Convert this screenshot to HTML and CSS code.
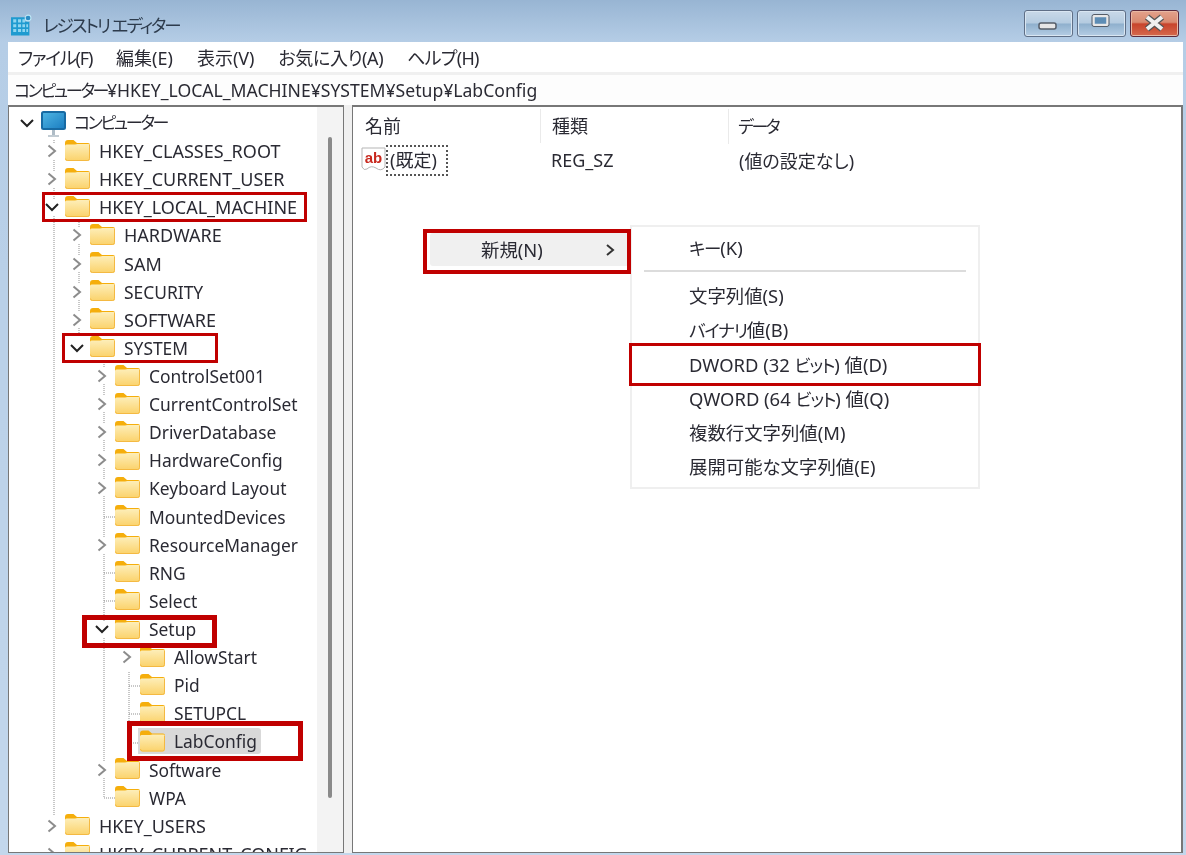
FILE: index.html
```html
<!DOCTYPE html>
<html lang="ja">
<head>
<meta charset="utf-8">
<title>レジストリ エディター</title>
<link rel="stylesheet" href="styles.css">
</head>
<body>
<svg class="defs" aria-hidden="true">
  <defs>
    <linearGradient id="fg" x1="0" y1="0" x2="0" y2="1"><stop offset="0" stop-color="#fdeeb9"/><stop offset="1" stop-color="#fbd26a"/></linearGradient>
    <linearGradient id="sg" x1="0" y1="0" x2="1" y2="1"><stop offset="0" stop-color="#4fb6e4"/><stop offset="1" stop-color="#1a7cc0"/></linearGradient>
    <symbol id="folder" viewBox="0 0 25 21">
      <path d="M0 3Q0 0 3 0H8.500L12 3H23Q25 3 25 5V9H0Z" fill="#f5ae0c"/>
      <path d="M0 6Q0 4.500 1.500 4.500H10L12.500 4H23.500Q25 4 25 5.500V18.500Q25 21 22.500 21H2.500Q0 21 0 18.500Z" fill="url(#fg)"/>
      <path d="M24.500 5V18.500Q24.500 20.500 22.500 20.500H2.500Q0.500 20.500 0.500 18.500" fill="none" stroke="#f4b942"/>
    </symbol>
    <symbol id="closed" viewBox="0 0 16 16"><path d="M4.500 2.500L11 8L4.500 13.500" fill="none" stroke="#8c8c8c" stroke-width="2"/></symbol>
    <symbol id="open" viewBox="0 0 16 16"><path d="M2 5L8 11L14 5" fill="none" stroke="#222" stroke-width="2"/></symbol>
  </defs>
</svg>
<div class="window">
  <header class="titlebar">
    <svg class="app-icon" viewBox="0 0 24 24">
      <path d="M0 3H16V8H21V24H0Z" fill="#1f9bd0"/>
      <path d="M2.500 5.500h3.500v3.500h-3.500zM8 5.500h3.500v3.500H8zM13 5.500h3v3.500h-3zM2.500 11h3.500v3.500h-3.500zM8 11h3.500v3.500H8zM13 11h3v3.500h-3zM17.500 11h2v3.500h-2zM2.500 16.500h3.500v3.500h-3.500zM8 16.500h3.500v3.500H8zM13 16.500h3v3.500h-3zM17.500 16.500h2v3.500h-2z" fill="#8fd6f0"/>
      <circle cx="19.500" cy="4" r="3.300" fill="#2c8cc4" stroke="#bfe6f5" stroke-width="1.200"/>
    </svg>
    <span class="title">レジストリ エディター</span>
    <div class="controls">
      <div class="ctl"><svg viewBox="0 0 47 25"><rect x="14" y="12" width="17" height="6" rx="2" fill="#e6e6e6" stroke="#555d68" stroke-width="1.500"/></svg></div>
      <div class="ctl"><svg viewBox="0 0 47 25"><rect x="15.500" y="5" width="14" height="9" rx="1" fill="#5d8db5" stroke="#e8e8e8" stroke-width="2.500"/><rect x="14" y="3.500" width="17" height="12" rx="2" fill="none" stroke="#555d68"/></svg></div>
      <div class="ctl ctl-close"><svg viewBox="0 0 47 25"><path d="M16 6L31 18M31 6L16 18" stroke="#555" stroke-width="6.500"/><path d="M16 6L31 18M31 6L16 18" stroke="#f0f0f0" stroke-width="4"/></svg></div>
    </div>
  </header>
  <nav class="menubar">
    <span class="tight1">ファイル(F)</span><span>編集(E)</span><span>表示(V)</span><span class="tight3">お気に入り(A)</span><span class="tight2">ヘルプ(H)</span>
  </nav>
  <div class="address"><span class="kana">コンピューター</span>¥HKEY_LOCAL_MACHINE¥SYSTEM¥Setup¥LabConfig</div>
  <main class="panes">
    <section class="tree">
      <svg class="guides" aria-hidden="true"><path d="M45 33V708M70 115V228M95 253V690M120 565V638M95 410H107M95 466H107M95 494H107M95 691H107M120 579H132M120 607H132M120 636H132" fill="none" stroke="#8f8f8f" stroke-dasharray="1 1"/></svg>
      <div class="rows">
        <div class="row l0"><svg class="chev"><use href="#open"/></svg><svg class="monitor" viewBox="0 0 25 27"><rect x="1" y="1" width="23" height="17" rx="1.500" fill="url(#sg)" stroke="#176aa3" stroke-width="2"/><path d="M11 19h3v5h-3z" fill="#aebcc6"/><path d="M7 24h11v2H7z" fill="#c2ccd3"/></svg><span class="label kana">コンピューター</span></div>
        <div class="row l1"><svg class="chev"><use href="#closed"/></svg><svg class="fold"><use href="#folder"/></svg><span class="label caps">HKEY_CLASSES_ROOT</span></div>
        <div class="row l1"><svg class="chev"><use href="#closed"/></svg><svg class="fold"><use href="#folder"/></svg><span class="label caps">HKEY_CURRENT_USER</span></div>
        <div class="row l1"><svg class="chev"><use href="#open"/></svg><svg class="fold"><use href="#folder"/></svg><span class="label caps">HKEY_LOCAL_MACHINE</span></div>
        <div class="row l2"><svg class="chev"><use href="#closed"/></svg><svg class="fold"><use href="#folder"/></svg><span class="label caps">HARDWARE</span></div>
        <div class="row l2"><svg class="chev"><use href="#closed"/></svg><svg class="fold"><use href="#folder"/></svg><span class="label caps">SAM</span></div>
        <div class="row l2"><svg class="chev"><use href="#closed"/></svg><svg class="fold"><use href="#folder"/></svg><span class="label">SECURITY</span></div>
        <div class="row l2"><svg class="chev"><use href="#closed"/></svg><svg class="fold"><use href="#folder"/></svg><span class="label caps">SOFTWARE</span></div>
        <div class="row l2"><svg class="chev"><use href="#open"/></svg><svg class="fold"><use href="#folder"/></svg><span class="label">SYSTEM</span></div>
        <div class="row l3"><svg class="chev"><use href="#closed"/></svg><svg class="fold"><use href="#folder"/></svg><span class="label">ControlSet001</span></div>
        <div class="row l3"><svg class="chev"><use href="#closed"/></svg><svg class="fold"><use href="#folder"/></svg><span class="label">CurrentControlSet</span></div>
        <div class="row l3"><svg class="chev"><use href="#closed"/></svg><svg class="fold"><use href="#folder"/></svg><span class="label">DriverDatabase</span></div>
        <div class="row l3"><svg class="chev"><use href="#closed"/></svg><svg class="fold"><use href="#folder"/></svg><span class="label">HardwareConfig</span></div>
        <div class="row l3"><svg class="chev"><use href="#closed"/></svg><svg class="fold"><use href="#folder"/></svg><span class="label">Keyboard Layout</span></div>
        <div class="row l3"><span class="chev"></span><svg class="fold"><use href="#folder"/></svg><span class="label">MountedDevices</span></div>
        <div class="row l3"><svg class="chev"><use href="#closed"/></svg><svg class="fold"><use href="#folder"/></svg><span class="label">ResourceManager</span></div>
        <div class="row l3"><span class="chev"></span><svg class="fold"><use href="#folder"/></svg><span class="label">RNG</span></div>
        <div class="row l3"><span class="chev"></span><svg class="fold"><use href="#folder"/></svg><span class="label">Select</span></div>
        <div class="row l3"><svg class="chev"><use href="#open"/></svg><svg class="fold"><use href="#folder"/></svg><span class="label">Setup</span></div>
        <div class="row l4"><svg class="chev"><use href="#closed"/></svg><svg class="fold"><use href="#folder"/></svg><span class="label">AllowStart</span></div>
        <div class="row l4"><span class="chev"></span><svg class="fold"><use href="#folder"/></svg><span class="label">Pid</span></div>
        <div class="row l4"><span class="chev"></span><svg class="fold"><use href="#folder"/></svg><span class="label">SETUPCL</span></div>
        <div class="row l4 selected"><span class="chev"></span><svg class="fold"><use href="#folder"/></svg><span class="label">LabConfig</span></div>
        <div class="row l3"><svg class="chev"><use href="#closed"/></svg><svg class="fold"><use href="#folder"/></svg><span class="label">Software</span></div>
        <div class="row l3"><span class="chev"></span><svg class="fold"><use href="#folder"/></svg><span class="label">WPA</span></div>
        <div class="row l1"><svg class="chev"><use href="#closed"/></svg><svg class="fold"><use href="#folder"/></svg><span class="label caps">HKEY_USERS</span></div>
        <div class="row l1"><svg class="chev"><use href="#closed"/></svg><svg class="fold"><use href="#folder"/></svg><span class="label caps">HKEY_CURRENT_CONFIG</span></div>
      </div>
      <div class="scroll"><div class="thumb"></div></div>
    </section>
    <section class="list">
      <div class="list-head"><span class="col c1">名前</span><span class="col c2">種類</span><span class="col c3"><span class="kana">データ</span></span></div>
      <div class="list-row">
        <div class="col c1 name-cell">
          <svg class="ab" viewBox="0 0 25 26"><path d="M1 1H24V20Q20 25 15 21Q10 18 6 22Q3 24 1 20Z" fill="#fff" stroke="#b5b5b5"/><text x="12.500" y="16" class="ab-text">ab</text></svg>
          <span class="focus">(既定)</span>
        </div>
        <span class="col c2">REG_SZ</span><span class="col c3 data">(値の設定なし)</span>
      </div>
      <div class="ctx ctx-left"><div class="ctx-new"><span>新規(N)</span><svg class="sub" viewBox="0 0 12 14"><path d="M3 2L9 7L3 12" fill="none" stroke="#333" stroke-width="2"/></svg></div></div>
      <div class="ctx ctx-right">
        <div class="item"><span class="kana">キー</span>(K)</div>
        <div class="sep"></div>
        <div class="item">文字列値(S)</div>
        <div class="item"><span class="kana">バイナリ</span>値(B)</div>
        <div class="item">DWORD (32 <span class="kana">ビット</span>) 値(D)</div>
        <div class="item">QWORD (64 <span class="kana">ビット</span>) 値(Q)</div>
        <div class="item">複数行文字列値(M)</div>
        <div class="item">展開可能な文字列値(E)</div>
      </div>
    </section>
  </main>
  <div class="mark m1"></div>
  <div class="mark m2"></div>
  <div class="mark m3"></div>
  <div class="mark m4"></div>
  <div class="mark m5"></div>
  <div class="mark m6"></div>
</div>
</body>
</html>
```
FILE: styles.css
```css
* { box-sizing: border-box; }
html, body { margin: 0; padding: 0; }
body { font-family: "Noto Sans", "Noto Sans CJK JP", sans-serif; font-feature-settings: "palt"; color: #2a2a33; }
.defs { position: absolute; width: 0; height: 0; }
.window { position: relative; width: 1186px; height: 855px; overflow: hidden; padding: 0 3px 2px 8px; display: flex; flex-direction: column; background: linear-gradient(180deg, #98b5d3 0, #b5cde6 42px, #c3d7ec 100%); filter: blur(0.3px); }
.titlebar { height: 42px; margin-left: -8px; margin-right: -3px; padding: 10px 7px 0 11px; display: flex; align-items: flex-start; flex: none; }
.app-icon { width: 21px; height: 22px; margin-top: 4px; flex: none; }
.title { margin-left: 11px; font-size: 17.500px; letter-spacing: -2px; line-height: 30px; color: #2d3b4c; }
.controls { margin-left: auto; display: flex; gap: 4px; }
.ctl { width: 49px; height: 27px; border: 1px solid #5f6f86; border-radius: 3px; box-shadow: inset 0 0 0 1px #d9e6f2; background: linear-gradient(180deg, #c9d9e8 0, #b4cbe0 48%, #8fb0cd 52%, #b5cde4 100%); }
.ctl svg { display: block; width: 47px; height: 25px; }
.ctl-close { border-color: #5c2a3c; box-shadow: inset 0 0 0 1px #e8b8a4; background: linear-gradient(180deg, #e3a28c 0, #d98a70 45%, #c8442c 52%, #d5694d 100%); }
.menubar { height: 30px; flex: none; background: #fff; display: flex; align-items: center; padding: 0 0 0 10px; gap: 24px; font-size: 18px; }
.tight1 { letter-spacing: -1.200px; }
.tight2 { letter-spacing: -0.700px; }
.tight3 { letter-spacing: -0.400px; }
.address { height: 33px; flex: none; border-top: 3px solid #f0f0f0; background: #fdfdfd; padding-left: 6px; line-height: 30px; font-size: 17.600px; white-space: nowrap; }
.kana { font-size: 17px; letter-spacing: -2.400px; }
.panes { flex: 1; min-height: 0; display: flex; gap: 8px; background: #f0f0f0; }
.tree { position: relative; width: 336px; flex: none; display: flex; background: #fff; border: 1px solid #777; border-top-width: 2px; overflow: hidden; }
.guides { position: absolute; left: 0; top: 0; width: 320px; height: 745px; }
.rows { position: relative; flex: 1; min-width: 0; padding-top: 2px; }
.row { height: 28.120px; display: flex; align-items: center; white-space: nowrap; }
.l0 { padding-left: 10px; }
.l1 { padding-left: 35px; }
.l2 { padding-left: 60px; }
.l3 { padding-left: 85px; }
.l4 { padding-left: 110px; }
.chev { width: 16px; height: 16px; flex: none; margin-right: 5px; display: block; background: #fff; }
span.chev { background: transparent; }
.fold { width: 25px; height: 21px; flex: none; margin-top: -2px; }
.monitor { width: 25px; height: 27px; flex: none; margin-left: 1px; margin-top: 2px; }
.label { margin-left: 9px; font-size: 17.400px; line-height: 26px; padding-right: 2px; }
.label.kana { margin-left: 8px; font-size: 17px; }
.caps { font-size: 18px; }
.selected .label { background: #d9d9d9; border-radius: 0 3px 3px 0; margin-left: 0; padding: 0 4px 0 9px; }
.selected .fold { background: #d9d9d9; margin-top: 0; height: 26px; box-shadow: -2px 0 0 #d9d9d9; }
.scroll { width: 26px; flex: none; background: #f3f3f3; padding-top: 30px; display: flex; justify-content: center; }
.thumb { width: 4px; height: 661px; background: #8a8a8a; border-radius: 2px; }
.list { position: relative; flex: 1; min-width: 0; background: #fff; border: 1px solid #777; border-top-width: 2px; border-right-width: 2px; }
.list-head { display: flex; height: 38px; align-items: center; font-size: 18px; }
.col { display: block; flex: none; }
.c1 { width: 187px; padding-left: 12px; }
.c2 { width: 188px; padding-left: 11px; border-left: 1px solid #eaeaea; }
.c3 { padding-left: 9px; border-left: 1px solid #eaeaea; }
.list-head .col { line-height: 34px; }
.list-row { display: flex; align-items: center; height: 30px; margin-top: 0; font-size: 18px; }
.list-row .col { border-left: 0; }
.name-cell { display: flex; align-items: center; padding-left: 8px; }
.data { padding-left: 11px; }
.ab { width: 25px; height: 26px; flex: none; }
.ab-text { font-family: "Liberation Sans", sans-serif; font-weight: 700; font-size: 15px; fill: #c8281e; text-anchor: middle; }
.focus { padding: 0 9px 0 2px; height: 31px; line-height: 27px; border: 2px dotted #555; }
.ctx { position: absolute; background: #fff; }
.ctx-left { left: 70px; top: 120px; width: 208px; height: 50px; padding: 6px 2px 6px 7px; }
.ctx-new { height: 33px; background: #f0f0f0; border-radius: 3px; display: flex; align-items: center; padding-left: 51px; font-size: 18.400px; line-height: 28px; }
.sub { width: 12px; height: 14px; margin-left: 61px; }
.ctx-right { left: 277px; top: 118px; width: 350px; height: 264px; border: 2px solid #efefef; padding: 4px 0 0 0; }
.item { height: 34.200px; line-height: 34px; padding-left: 57px; font-size: 18.400px; white-space: nowrap; }
.item .kana { font-size: 17.500px; letter-spacing: -1.200px; }
.sep { height: 2px; margin: 5px 12px 7px 12px; background: #dcdcdc; }
.mark { position: absolute; border-style: solid; border-color: #c00000; }
.m1 { left: 42px; top: 192px; width: 265px; height: 30px; border-width: 3px; }
.m2 { left: 62px; top: 333px; width: 156px; height: 30px; border-width: 3px; }
.m3 { left: 82px; top: 615px; width: 135px; height: 33px; border-width: 5px; }
.m4 { left: 127px; top: 721px; width: 176px; height: 40px; border-width: 5px; }
.m5 { left: 423px; top: 229px; width: 208px; height: 45px; border-width: 4px; }
.m6 { left: 629px; top: 343px; width: 352px; height: 43px; border-width: 3px; }
```
